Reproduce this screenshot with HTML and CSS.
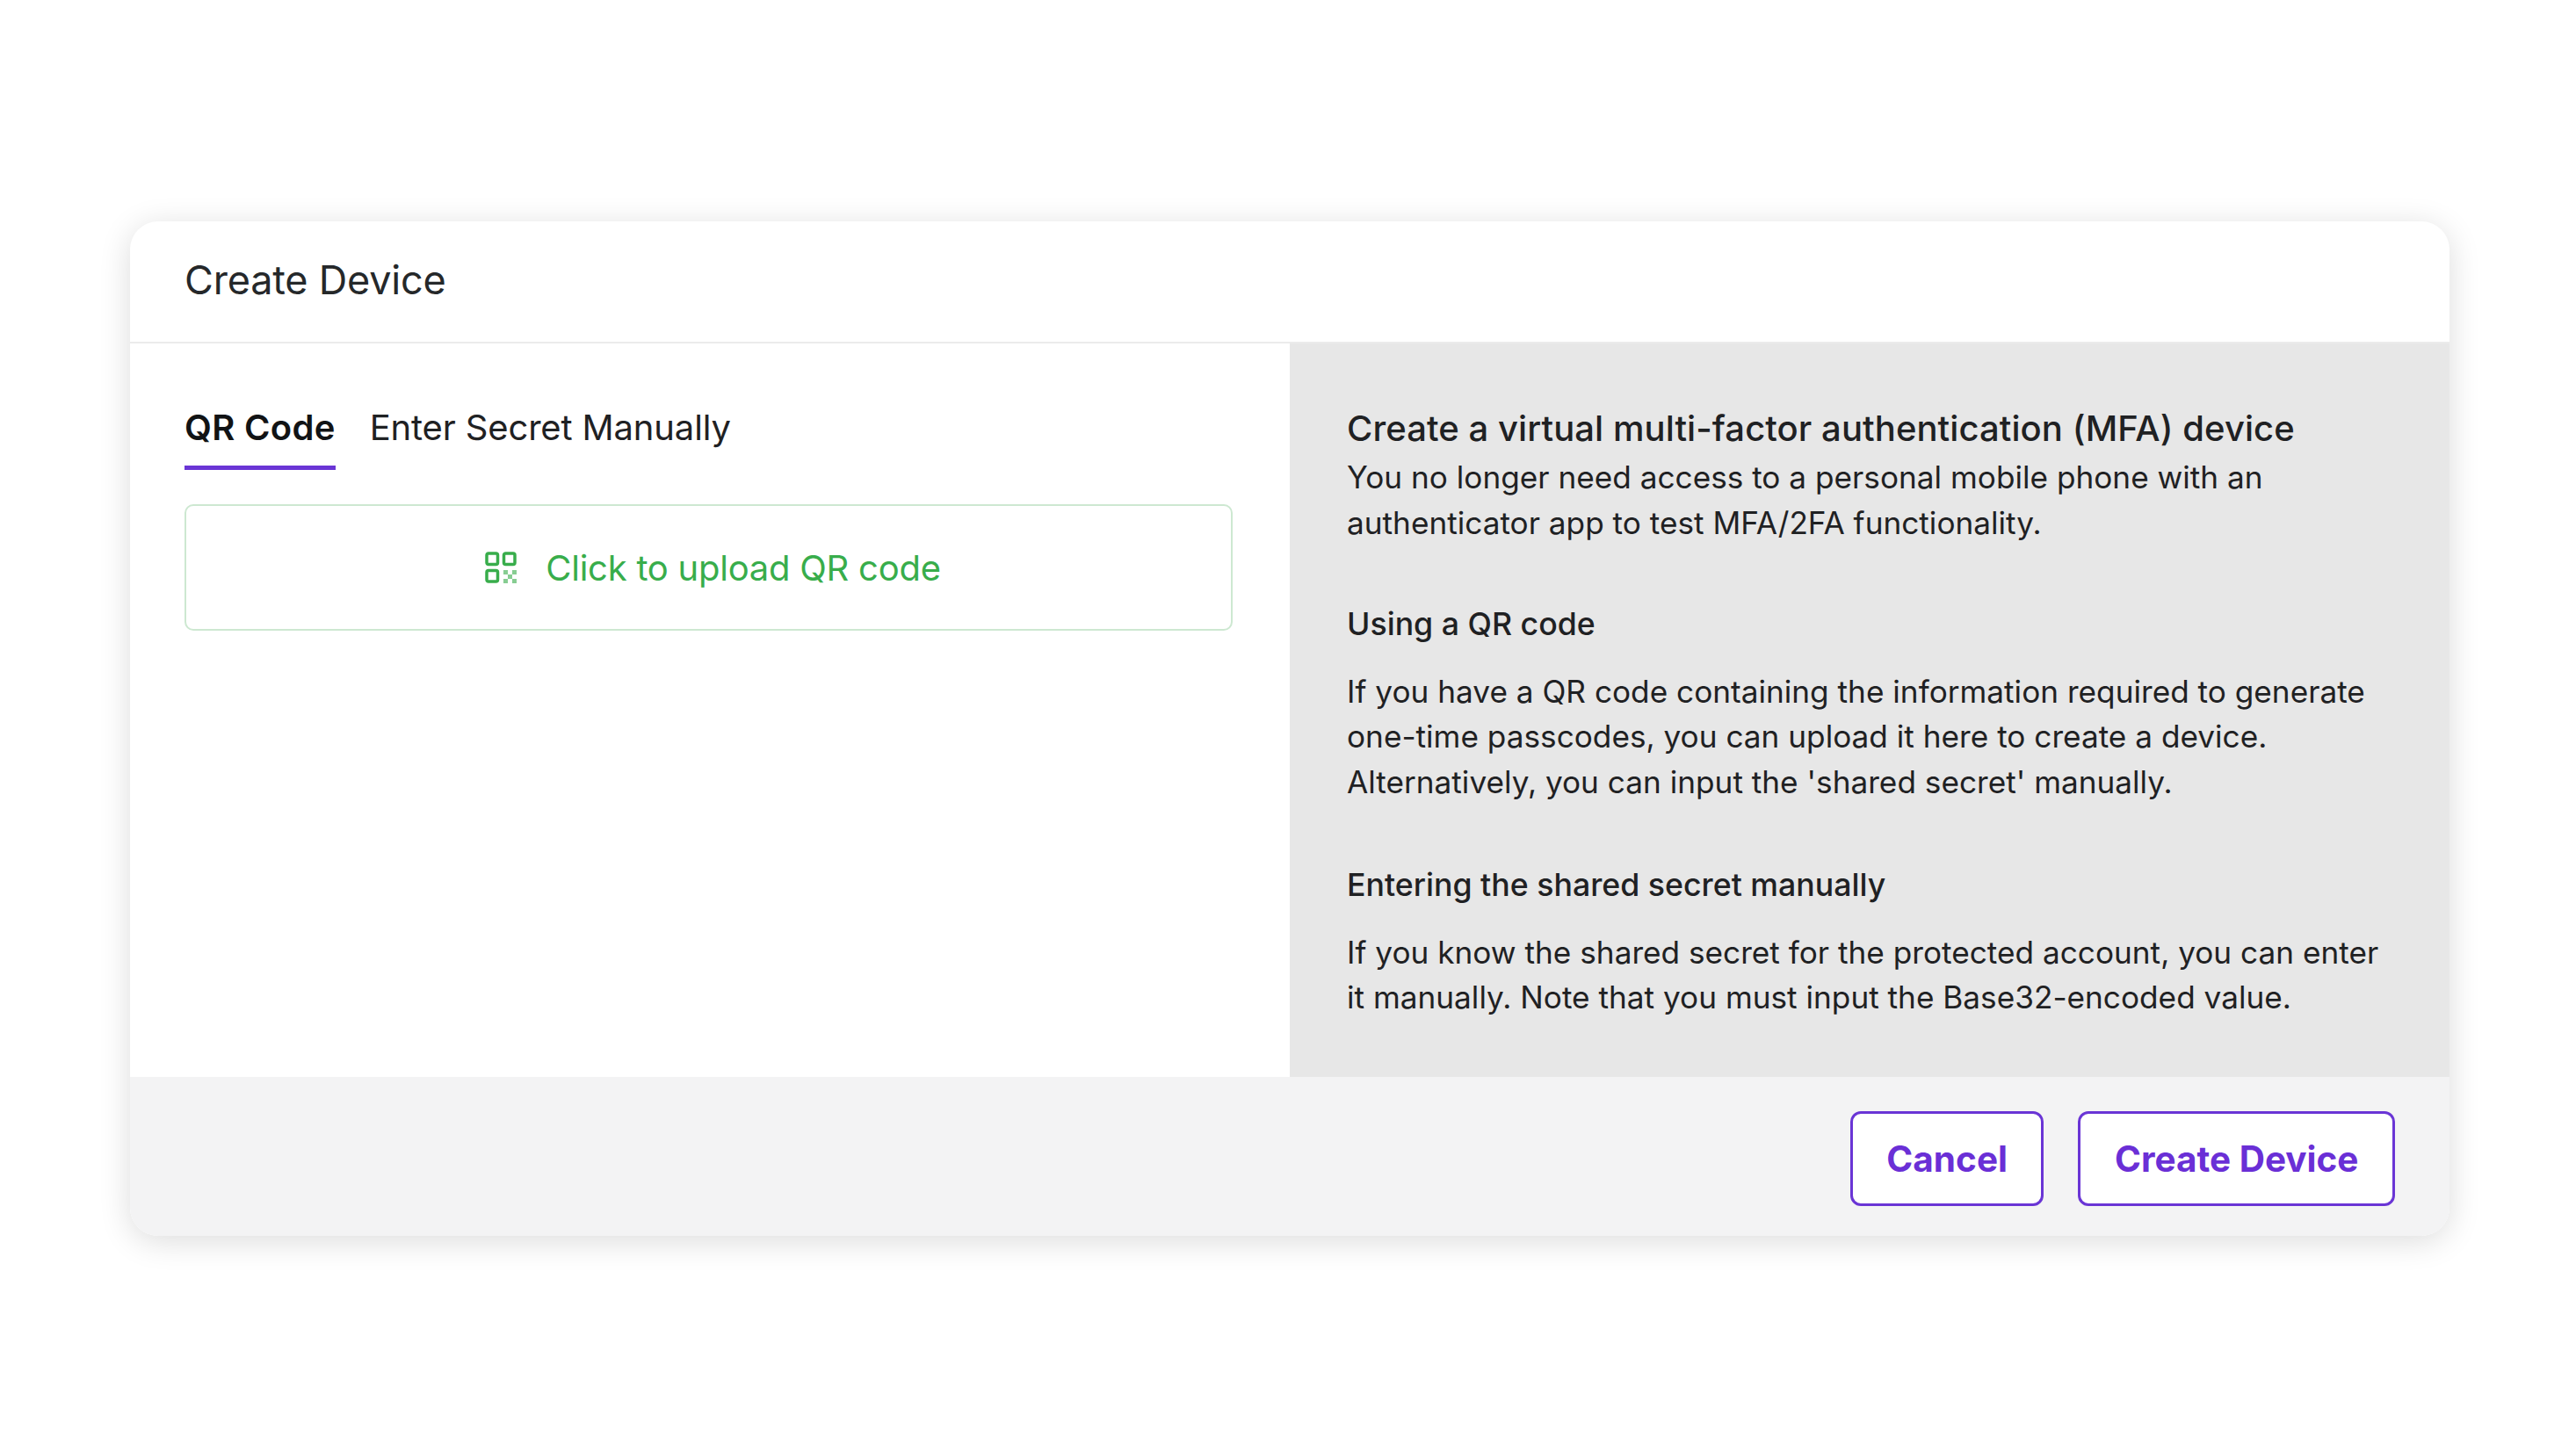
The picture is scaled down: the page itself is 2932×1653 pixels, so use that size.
FILE: index.html
```html
<!DOCTYPE html>
<html lang="en">
<head>
    <meta charset="UTF-8">
    <title>Create Device</title>
    <link rel="stylesheet" href="styles.css">
</head>
<body>
    <div class="modal">
        <div class="modal-header">
            <h2 class="modal-title">Create Device</h2>
        </div>
        <div class="modal-body">
            <div class="form-pane">
                <div class="tabs">
                    <button class="tab active">QR Code</button>
                    <button class="tab">Enter Secret Manually</button>
                </div>
                <button class="upload-box">
                    <svg class="upload-icon" viewBox="0 0 36 36" fill="none" stroke="currentColor" stroke-width="3.5">
                        <rect x="2" y="2" width="12.5" height="12.5" rx="2"/>
                        <rect x="21.5" y="2" width="12.5" height="12.5" rx="2"/>
                        <rect x="2" y="21.5" width="12.5" height="12.5" rx="2"/>
                        <g class="qr-dots" fill="currentColor" stroke="none">
                            <rect x="21" y="21" width="5" height="5"/>
                            <rect x="31" y="21" width="5" height="5"/>
                            <rect x="26" y="26" width="5" height="5"/>
                            <rect x="21" y="31" width="5" height="5"/>
                            <rect x="31" y="31" width="5" height="5"/>
                        </g>
                    </svg>
                    <span>Click to upload QR code</span>
                </button>
            </div>
            <div class="help-pane">
                <h3 class="help-title">Create a virtual multi-factor authentication (MFA) device</h3>
                <p class="help-intro">You no longer need access to a personal mobile phone with an authenticator app to test MFA/2FA functionality.</p>
                <h4 class="help-heading">Using a QR code</h4>
                <p class="help-text">If you have a QR code containing the information required to generate one-time passcodes, you can upload it here to create a device. Alternatively, you can input the 'shared secret' manually.</p>
                <h4 class="help-heading help-heading-last">Entering the shared secret manually</h4>
                <p class="help-text">If you know the shared secret for the protected account, you can enter it manually. Note that you must input the Base32-encoded value.</p>
            </div>
        </div>
        <div class="modal-footer">
            <button class="btn">Cancel</button>
            <button class="btn">Create Device</button>
        </div>
    </div>
</body>
</html>
```

FILE: styles.css
```css
* {
    margin: 0;
    padding: 0;
    box-sizing: border-box;
}

body {
    font-family: Inter, "Liberation Sans", sans-serif;
    background: #ffffff;
    color: #1f2123;
    padding: 252px 144px 0 148px;
    min-height: 100vh;
    overflow: hidden;
}

button {
    font-family: inherit;
    background: none;
    border: none;
}

.modal {
    height: 1155px;
    display: flex;
    flex-direction: column;
    background: #ffffff;
    border-radius: 32px;
    overflow: hidden;
    box-shadow: 0 6px 36px rgba(0, 0, 0, 0.14);
}

.modal-header {
    height: 139px;
    padding: 0 62px 5px;
    display: flex;
    align-items: center;
    border-bottom: 2px solid #ebebeb;
}

.modal-title {
    font-size: 45px;
    font-weight: 400;
    letter-spacing: -0.2px;
    color: #25282a;
}

.modal-body {
    height: 835px;
    display: flex;
}

.form-pane {
    width: 1320px;
    padding: 52px 62px 0;
}

.tabs {
    display: flex;
    gap: 39px;
    margin-bottom: 39px;
}

.tab {
    height: 92px;
    font-size: 40px;
    letter-spacing: -0.15px;
    color: #1f2123;
    border-bottom: 5px solid transparent;
}

.tab.active {
    font-weight: 600;
    letter-spacing: 0.3px;
    color: #111315;
    border-bottom-color: #6a35d5;
}

.upload-box {
    width: 1193px;
    height: 144px;
    display: flex;
    align-items: center;
    justify-content: center;
    gap: 33px;
    padding-left: 10px;
    border: 2px solid #cde8d1;
    border-radius: 10px;
    font-size: 40px;
    letter-spacing: -0.25px;
    color: #38ad4b;
}

.upload-icon {
    width: 36px;
    height: 36px;
}

.qr-dots {
    opacity: 0.6;
}

.help-pane {
    flex: 1;
    padding: 67px 62px 0 65px;
    background: #e7e7e7;
    font-size: 35.2px;
    line-height: 51.5px;
    color: #1f2123;
}

.help-title {
    font-size: 40px;
    font-weight: 500;
    letter-spacing: 0.07px;
    line-height: 60px;
}

.help-heading {
    font-size: 35.7px;
    font-weight: 500;
    margin-top: 64px;
    margin-bottom: 25px;
}

.help-heading-last {
    margin-top: 66px;
}

.modal-footer {
    flex: 1;
    display: flex;
    justify-content: flex-end;
    gap: 39px;
    padding: 39px 62px 0;
    background: #f3f3f4;
}

.btn {
    height: 108px;
    padding: 0 38.5px;
    background: #ffffff;
    border: 3px solid #6a35d5;
    border-radius: 12px;
    font-size: 40.5px;
    font-weight: 700;
    color: #6a2fd6;
}
```
